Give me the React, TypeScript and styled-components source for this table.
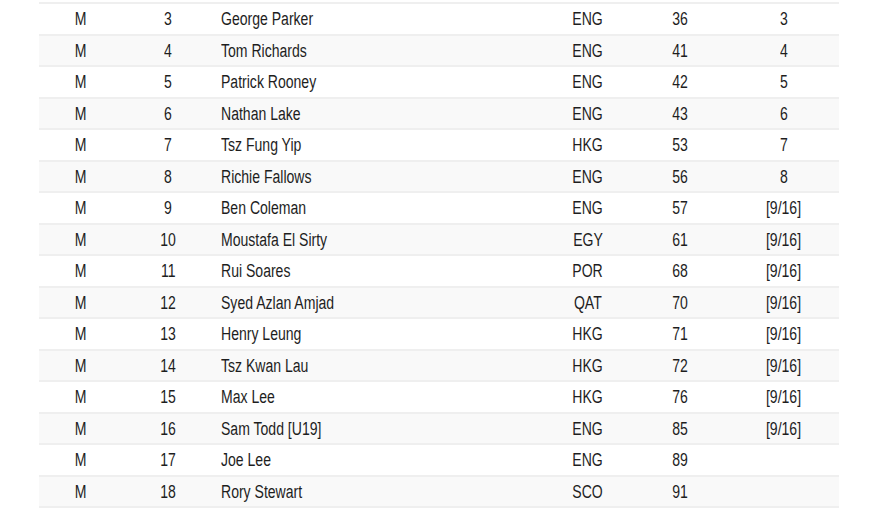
import styled, { createGlobalStyle } from "styled-components"

const GlobalStyle = createGlobalStyle`
    body {
        margin: 0;
        background: #ffffff;
        font-family: "Liberation Sans", Arial, sans-serif;
    }
`

const Page = styled.div`
    padding: 2px 40px 0 39px;
`

const Table = styled.div`
    width: 800px;
    display: flex;
    flex-direction: column;
    color: #1e1e1e;
    font-size: 18px;
`

const Row = styled.div<{ $shaded: boolean }>`
    display: grid;
    grid-template-columns: 82px 94px 330px 86px 98px 110px;
    box-sizing: border-box;
    height: 31.53px;
    padding-top: 2px;
    background: ${(p) => (p.$shaded ? "#f9f9f9" : "#ffffff")};
    border-top: 2px solid #efefef;
    &:last-child {
        height: 33.53px;
        border-bottom: 2px solid #efefef;
    }
`

const Cell = styled.div<{ $left?: boolean }>`
    display: flex;
    align-items: center;
    justify-content: ${(p) => (p.$left ? "flex-start" : "center")};
    padding-left: ${(p) => (p.$left ? "6px" : "0")};
    white-space: nowrap;
`

/* the source font is a condensed grotesque, so squeeze Liberation Sans */
const Text = styled.span<{ $left?: boolean }>`
    display: inline-block;
    transform: scaleX(0.78);
    transform-origin: ${(p) => (p.$left ? "left center" : "center")};
`

const players = [
    [3, "George Parker", "ENG", 36, "3"],
    [4, "Tom Richards", "ENG", 41, "4"],
    [5, "Patrick Rooney", "ENG", 42, "5"],
    [6, "Nathan Lake", "ENG", 43, "6"],
    [7, "Tsz Fung Yip", "HKG", 53, "7"],
    [8, "Richie Fallows", "ENG", 56, "8"],
    [9, "Ben Coleman", "ENG", 57, "[9/16]"],
    [10, "Moustafa El Sirty", "EGY", 61, "[9/16]"],
    [11, "Rui Soares", "POR", 68, "[9/16]"],
    [12, "Syed Azlan Amjad", "QAT", 70, "[9/16]"],
    [13, "Henry Leung", "HKG", 71, "[9/16]"],
    [14, "Tsz Kwan Lau", "HKG", 72, "[9/16]"],
    [15, "Max Lee", "HKG", 76, "[9/16]"],
    [16, "Sam Todd [U19]", "ENG", 85, "[9/16]"],
    [17, "Joe Lee", "ENG", 89, ""],
    [18, "Rory Stewart", "SCO", 91, ""],
] as const

export default function App() {
    return (
        <Page>
            <GlobalStyle />
            <Table>
                {players.map(([seed, name, nation, rank, result]) => (
                    <Row key={seed} $shaded={seed % 2 === 0}>
                        <Cell><Text>M</Text></Cell>
                        <Cell><Text>{seed}</Text></Cell>
                        <Cell $left><Text $left>{name}</Text></Cell>
                        <Cell><Text>{nation}</Text></Cell>
                        <Cell><Text>{rank}</Text></Cell>
                        <Cell><Text>{result}</Text></Cell>
                    </Row>
                ))}
            </Table>
        </Page>
    )
}
